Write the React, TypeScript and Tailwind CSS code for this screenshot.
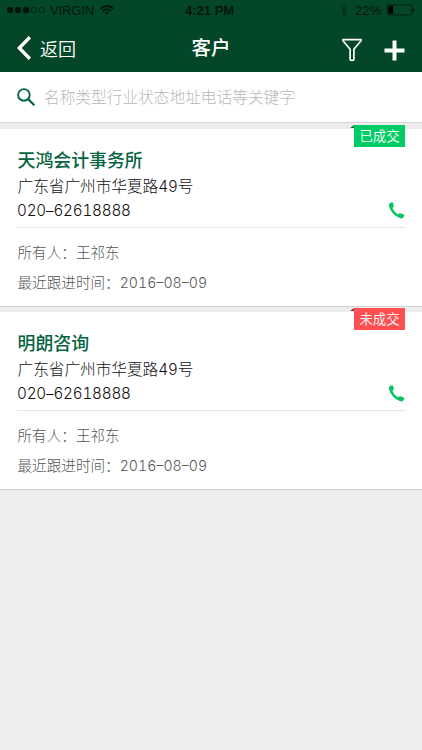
import { ReactNode } from "react";

type Customer = {
    id: number,
    name: string,
    street: string,
    streetNo: string,
    phone: string,
    owner: string,
    followUp: string,
    closed: boolean
}

const customers: Customer[] = [
    { id: 1, name: "天鸿会计事务所", street: "广东省广州市华夏路", streetNo: "49", phone: "020–62618888", owner: "王祁东", followUp: "2016–08–09", closed: true },
    { id: 2, name: "明朗咨询", street: "广东省广州市华夏路", streetNo: "49", phone: "020–62618888", owner: "王祁东", followUp: "2016–08–09", closed: false },
];

function StatusBar() {
    return (
        <div className="flex h-5 items-center pl-[7px] pr-[7px] font-['Liberation_Sans','Noto_Sans_CJK_SC',sans-serif] leading-5 text-[#03150c]">
            <svg width="38" height="8" viewBox="0 0 38 8" className="shrink-0">
                <circle cx="3.2" cy="4" r="3.2" fill="#03150c" />
                <circle cx="11.1" cy="4" r="3.2" fill="#03150c" />
                <circle cx="19" cy="4" r="3.2" fill="#03150c" />
                <circle cx="26.7" cy="4" r="2.8" fill="none" stroke="#03150c" strokeWidth="0.7" />
                <circle cx="34.6" cy="4" r="2.8" fill="none" stroke="#03150c" strokeWidth="0.7" />
            </svg>
            <span className="ml-[5px] w-[43px] pt-px text-[13px] tracking-[-0.1px]">VIRGIN</span>
            <svg width="14" height="10" viewBox="0 0 14 10" className="ml-[7px] shrink-0" fill="none" stroke="#03150c" strokeWidth="1.9">
                <path d="M0.8 3.6 a8.8 8.8 0 0 1 12.4 0" />
                <path d="M3 6 a5.7 5.7 0 0 1 8 0" />
                <path d="M7 9.8 L4.9 7.7 a3 3 0 0 1 4.2 0 Z" fill="#03150c" stroke="none" />
            </svg>
            <span className="ml-[71px] w-[52px] whitespace-nowrap pt-px text-[13px] font-bold">4:21 PM</span>
            <svg width="8" height="14" viewBox="0 0 8 14" className="ml-auto shrink-0" fill="none" stroke="#052a18" strokeWidth="1">
                <path d="M0.8 3.8 L7 10 L4 12.8 V1.2 L7 4 L0.8 10.2" />
            </svg>
            <span className="ml-[7px] w-[28px] pt-px text-[13px] tracking-[0.2px]">22%</span>
            <svg width="28" height="12" viewBox="0 0 28 12" className="ml-[4px] shrink-0">
                <rect x="0.5" y="0.9" width="24.4" height="10" rx="1" fill="none" stroke="#03150c" strokeWidth="0.8" />
                <rect x="1.5" y="2" width="4.6" height="7.8" fill="#000" />
                <path d="M25.8 4 q1.6 0.4 1.6 2 q0 1.6 -1.6 2 Z" fill="#03150c" />
            </svg>
        </div>
    )
}

function Header() {
    return (
        <header className="h-[72px] bg-[#034728]">
            <StatusBar />
            <div className="grid h-[52px] grid-cols-3 items-start px-[17px] text-white">
                <div className="flex items-center pt-[16px]">
                    <svg width="14" height="24" viewBox="0 0 14 24" fill="none" stroke="#fff" strokeWidth="3.4">
                        <path d="M12.8 1.3 L2.3 12 L12.8 22.7" />
                    </svg>
                    <span className="ml-[9px] text-[18px] font-[350] leading-[24px]">返回</span>
                </div>
                <h1 className="pt-[13px] text-center text-[19.5px] font-medium leading-[28px]">客户</h1>
                <div className="flex items-center justify-end pt-[18px]">
                    <svg width="20" height="24" viewBox="0 0 20 24" fill="none" stroke="#fff" strokeWidth="1.7" strokeLinejoin="round">
                        <path d="M1 1.6 H19 V2.8 L11.9 11.2 V21 Q11.9 22.4 10 22.4 Q8.1 22.4 8.1 21 V11.2 L1 2.8 Z" />
                    </svg>
                    <svg width="21" height="21" viewBox="0 0 21 21" className="ml-[22px]" fill="none" stroke="#fff" strokeWidth="4">
                        <path d="M0.5 10.5 H20.5 M10.5 0.5 V20.5" />
                    </svg>
                </div>
            </div>
        </header>
    )
}

function SearchBar() {
    return (
        <div className="flex h-[51px] items-center border-b border-[#d6d6d6] bg-white pl-[17px]">
            <svg width="19" height="19" viewBox="0 0 19 19" fill="none" stroke="#056440" strokeWidth="1.9">
                <circle cx="6.9" cy="6.9" r="5.8" />
                <path d="M11 11 L17.3 17.3" strokeWidth="2.3" />
            </svg>
            <span className="ml-[8px] text-[15.7px] font-light leading-6 text-[#b8b8b8]">名称类型行业状态地址电话等关键字</span>
        </div>
    )
}

function StatusBadge({ closed }: { closed: boolean }) {
    return (
        <div className={`absolute right-[17px] -top-[4px] h-[22px] w-[51px] text-center text-[13.4px] font-[350] leading-[21px] text-white ${closed ? "bg-[#00cc66]" : "bg-[#ff4f50]"}`}>
            {/* Folded ribbon corner */}
            <svg width="4" height="3" viewBox="0 0 4 3" className="absolute -left-[4px] top-0">
                <path d="M0 3 L4 0 V3 Z" fill={closed ? "#087a42" : "#a92b2d"} />
            </svg>
            {closed ? "已成交" : "未成交"}
        </div>
    )
}

function Numeric({ children }: { children: ReactNode }) {
    return <span className="font-['Inter','Noto_Sans_CJK_SC',sans-serif] text-[0.97em] font-light leading-none tabular-nums">{children}</span>
}

function CustomerCard({ customer }: { customer: Customer }) {
    return (
        <article className="relative h-[178px] border-b border-[#d2d2d2] bg-white px-[17px] pt-[16px]">
            <StatusBadge closed={customer.closed} />
            <h2 className="ml-[0.5px] text-[17.9px] font-medium leading-[28px] text-[#056440]">{customer.name}</h2>
            <p className="ml-[0.5px] mt-px h-[24px] text-[15.7px] font-light leading-[24px] tracking-[-0.05px] text-[#111]">
                {customer.street}<Numeric>{customer.streetNo}</Numeric>号
            </p>
            <div className="flex h-[30px] items-start justify-between border-b border-[#e5e5e5] text-[15.7px] leading-[24px] text-[#111]">
                <div className="h-[24px] tracking-[-0.18px]"><Numeric>{customer.phone}</Numeric></div>
                <svg width="17" height="17" viewBox="0 0 17 17" className="mt-[4px]">
                    <path d="M2 1 L3.8 0.3 Q4.7 0.1 5.1 1 L5.8 3.8 Q5.9 4.7 5.3 5.1 L4.4 5.9 Q6 9.8 9.9 12.2 L11.1 11.4 Q11.7 11 12.4 11.3 L15.8 12.5 Q16.6 12.9 16.2 13.8 L15.3 15.6 Q14.2 16.8 12.3 16.3 Q3.7 13.2 0.9 4.2 Q0.5 1.8 2 1 Z" fill="#0ac464" />
                </svg>
            </div>
            <div className="ml-[0.5px] pt-[9px] text-[14.6px] font-light leading-[30px] text-[#555]">
                <p className="h-[30px]">所有人：{customer.owner}</p>
                <p className="h-[30px]">最近跟进时间：<Numeric>{customer.followUp}</Numeric></p>
            </div>
        </article>
    )
}

export default function App() {
    return (
        <main className="min-h-screen bg-[#ededed] font-['Noto_Sans_CJK_SC',sans-serif]">
            <Header />
            <SearchBar />
            <section className="mt-[6px] flex flex-col gap-[5px]">
                {customers.map(customer => (
                    <CustomerCard key={customer.id} customer={customer} />
                ))}
            </section>
        </main>
    )
}
